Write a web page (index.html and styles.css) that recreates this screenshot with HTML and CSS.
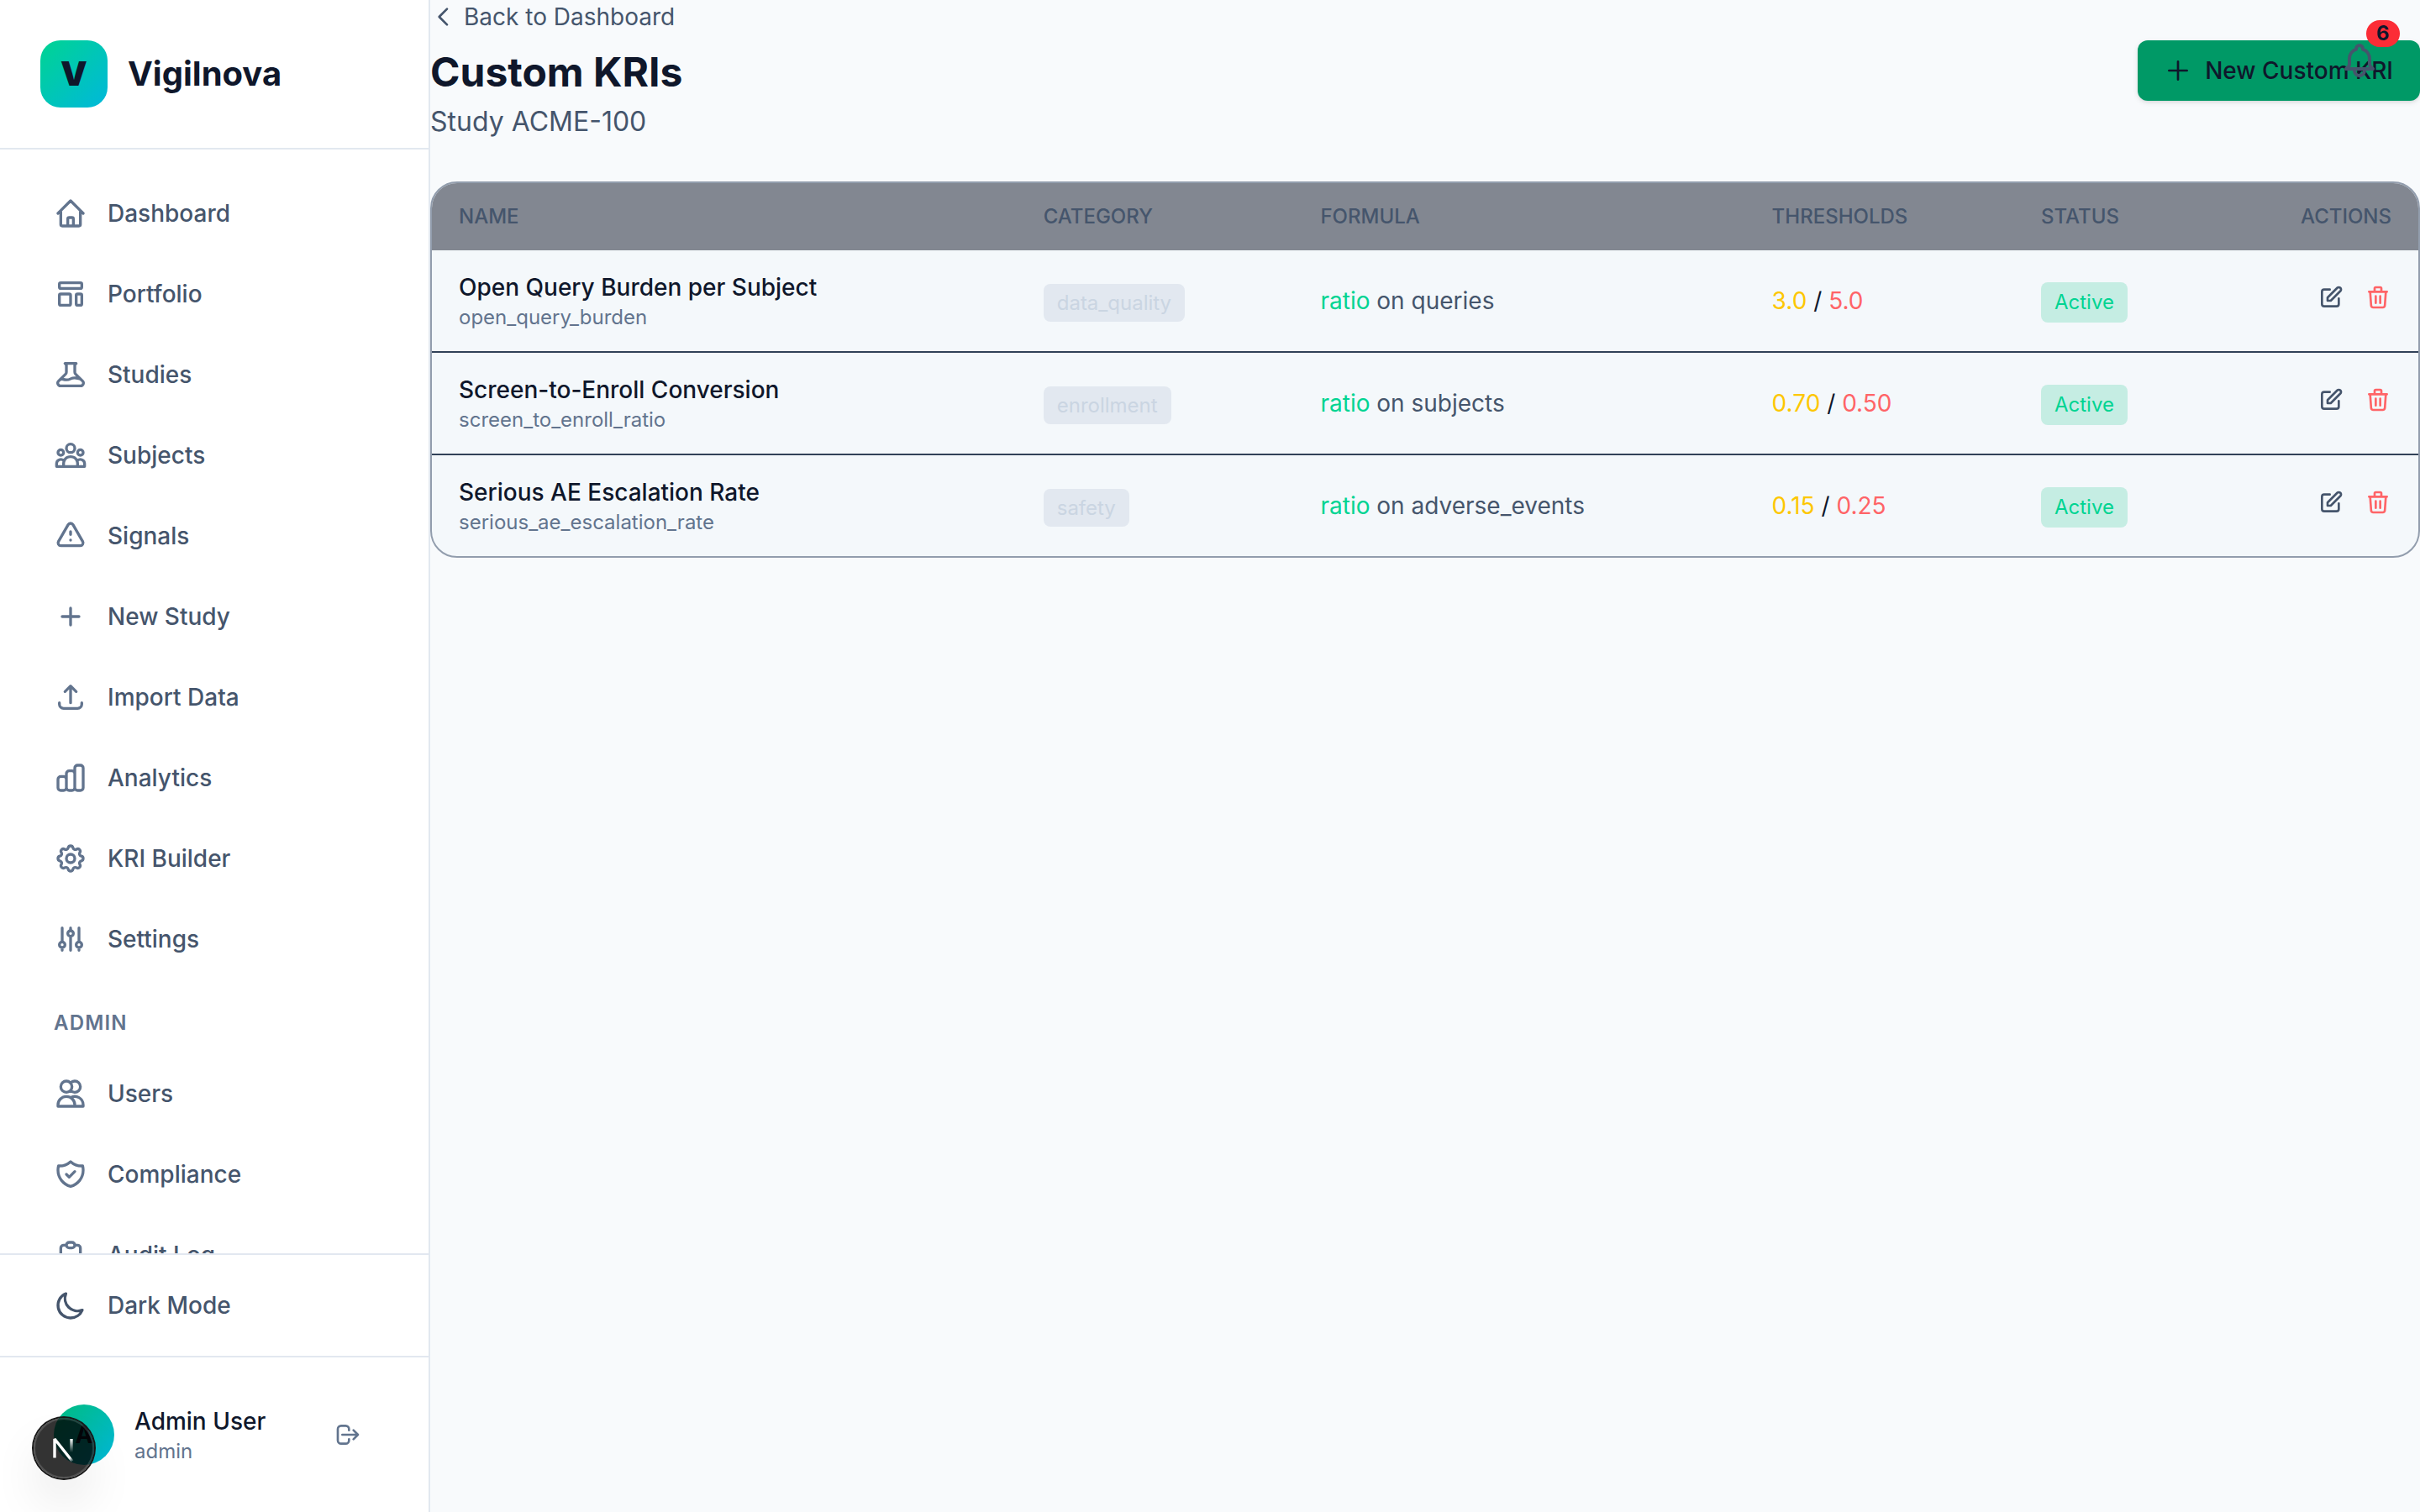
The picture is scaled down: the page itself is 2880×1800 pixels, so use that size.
FILE: index.html
```html
<!DOCTYPE html>
<html lang="en">
<head>
  <meta charset="UTF-8">
  <meta name="viewport" content="width=device-width, initial-scale=1.0">
  <title>Vigilnova</title>
  <link rel="stylesheet" href="styles.css">
</head>
<body>

<!-- icons used more than once -->
<svg class="sprite" aria-hidden="true">
  <symbol id="icon-edit" viewBox="0 0 24 24"><path d="M11 5H6a2 2 0 00-2 2v11a2 2 0 002 2h11a2 2 0 002-2v-5m-1.414-9.414a2 2 0 112.828 2.828L11.828 15H9v-2.828l8.586-8.586z"/></symbol>
  <symbol id="icon-trash" viewBox="0 0 24 24"><path d="M19 7l-.867 12.142A2 2 0 0116.138 21H7.862a2 2 0 01-1.995-1.858L5 7m5 4v6m4-6v6m1-10V4a1 1 0 00-1-1h-4a1 1 0 00-1 1v3M4 7h16"/></symbol>
</svg>

<div class="app">
  <aside class="sidebar">
    <div class="brand">
      <span class="brand-logo">V</span>
      <span class="brand-name">Vigilnova</span>
    </div>

    <nav class="nav">
      <a class="nav-item" href="#">
        <svg class="icon" viewBox="0 0 24 24"><path d="M3 12l2-2m0 0l7-7 7 7M5 10v10a1 1 0 001 1h3m10-11l2 2m-2-2v10a1 1 0 01-1 1h-3m-6 0a1 1 0 001-1v-4a1 1 0 011-1h2a1 1 0 011 1v4a1 1 0 001 1m-6 0h6"/></svg>
        Dashboard
      </a>
      <a class="nav-item" href="#">
        <svg class="icon" viewBox="0 0 24 24"><path d="M4 5a1 1 0 011-1h14a1 1 0 011 1v2a1 1 0 01-1 1H5a1 1 0 01-1-1V5zM4 13a1 1 0 011-1h6a1 1 0 011 1v6a1 1 0 01-1 1H5a1 1 0 01-1-1v-6zM16 13a1 1 0 011-1h2a1 1 0 011 1v6a1 1 0 01-1 1h-2a1 1 0 01-1-1v-6z"/></svg>
        Portfolio
      </a>
      <a class="nav-item" href="#">
        <svg class="icon" viewBox="0 0 24 24"><path d="M19.428 15.428a2 2 0 00-1.022-.547l-2.387-.477a6 6 0 00-3.86.517l-.318.158a6 6 0 01-3.86.517L6.05 15.21a2 2 0 00-1.806.547M8 4h8l-1 1v5.172a2 2 0 00.586 1.414l5 5c1.26 1.26.367 3.414-1.415 3.414H4.828c-1.782 0-2.674-2.154-1.414-3.414l5-5A2 2 0 009 10.172V5L8 4z"/></svg>
        Studies
      </a>
      <a class="nav-item" href="#">
        <svg class="icon" viewBox="0 0 24 24"><path d="M17 20h5v-2a3 3 0 00-5.356-1.857M17 20H7m10 0v-2c0-.656-.126-1.283-.356-1.857M7 20H2v-2a3 3 0 015.356-1.857M7 20v-2c0-.656.126-1.283.356-1.857m0 0a5.002 5.002 0 019.288 0M15 7a3 3 0 11-6 0 3 3 0 016 0zm6 3a2 2 0 11-4 0 2 2 0 014 0zM7 10a2 2 0 11-4 0 2 2 0 014 0z"/></svg>
        Subjects
      </a>
      <a class="nav-item" href="#">
        <svg class="icon" viewBox="0 0 24 24"><path d="M12 9v2m0 4h.01m-6.938 4h13.856c1.54 0 2.502-1.667 1.732-3L13.732 4c-.77-1.333-2.694-1.333-3.464 0L3.34 16c-.77 1.333.192 3 1.732 3z"/></svg>
        Signals
      </a>
      <a class="nav-item" href="#">
        <svg class="icon" viewBox="0 0 24 24"><path d="M12 6v6m0 0v6m0-6h6m-6 0H6"/></svg>
        New Study
      </a>
      <a class="nav-item" href="#">
        <svg class="icon" viewBox="0 0 24 24"><path d="M4 16v1a3 3 0 003 3h10a3 3 0 003-3v-1m-4-8l-4-4m0 0L8 8m4-4v12"/></svg>
        Import Data
      </a>
      <a class="nav-item" href="#">
        <svg class="icon" viewBox="0 0 24 24"><path d="M9 19v-6a2 2 0 00-2-2H5a2 2 0 00-2 2v6a2 2 0 002 2h2a2 2 0 002-2zm0 0V9a2 2 0 012-2h2a2 2 0 012 2v10m-6 0a2 2 0 002 2h2a2 2 0 002-2m0 0V5a2 2 0 012-2h2a2 2 0 012 2v14a2 2 0 01-2 2h-2a2 2 0 01-2-2z"/></svg>
        Analytics
      </a>
      <a class="nav-item" href="#">
        <svg class="icon" viewBox="0 0 24 24"><path d="M10.325 4.317c.426-1.756 2.924-1.756 3.35 0a1.724 1.724 0 002.573 1.066c1.543-.94 3.31.826 2.37 2.37a1.724 1.724 0 001.065 2.572c1.756.426 1.756 2.924 0 3.35a1.724 1.724 0 00-1.066 2.573c.94 1.543-.826 3.31-2.37 2.37a1.724 1.724 0 00-2.572 1.065c-.426 1.756-2.924 1.756-3.35 0a1.724 1.724 0 00-2.573-1.066c-1.543.94-3.31-.826-2.37-2.37a1.724 1.724 0 00-1.065-2.572c-1.756-.426-1.756-2.924 0-3.35a1.724 1.724 0 001.066-2.573c-.94-1.543.826-3.31 2.37-2.37.996.608 2.296.07 2.572-1.065z"/><path d="M15 12a3 3 0 11-6 0 3 3 0 016 0z"/></svg>
        KRI Builder
      </a>
      <a class="nav-item" href="#">
        <svg class="icon" viewBox="0 0 24 24"><path d="M12 6V4m0 2a2 2 0 100 4m0-4a2 2 0 110 4m-6 8a2 2 0 100-4m0 4a2 2 0 110-4m0 4v2m0-6V4m6 6v10m6-2a2 2 0 100-4m0 4a2 2 0 110-4m0 4v2m0-6V4"/></svg>
        Settings
      </a>

      <h2 class="nav-heading">Admin</h2>

      <a class="nav-item" href="#">
        <svg class="icon" viewBox="0 0 24 24"><path d="M12 4.354a4 4 0 110 5.292M15 21H3v-1a6 6 0 0112 0v1zm0 0h6v-1a6 6 0 00-9-5.197M13 7a4 4 0 11-8 0 4 4 0 018 0z"/></svg>
        Users
      </a>
      <a class="nav-item" href="#">
        <svg class="icon" viewBox="0 0 24 24"><path d="M9 12l2 2 4-4m5.618-4.016A11.955 11.955 0 0112 2.944a11.955 11.955 0 01-8.618 3.04A12.02 12.02 0 003 9c0 5.591 3.824 10.29 9 11.622 5.176-1.332 9-6.03 9-11.622 0-1.042-.133-2.052-.382-3.016z"/></svg>
        Compliance
      </a>
      <a class="nav-item" href="#">
        <svg class="icon" viewBox="0 0 24 24"><path d="M9 5H7a2 2 0 00-2 2v12a2 2 0 002 2h10a2 2 0 002-2V7a2 2 0 00-2-2h-2M9 5a2 2 0 002 2h2a2 2 0 002-2M9 5a2 2 0 012-2h2a2 2 0 012 2"/></svg>
        Audit Log
      </a>
    </nav>

    <div class="theme">
      <button class="nav-item theme-toggle" type="button">
        <svg class="icon" viewBox="0 0 24 24"><path d="M20.354 15.354A9 9 0 018.646 3.646 9.003 9.003 0 0012 21a9.003 9.003 0 008.354-5.646z"/></svg>
        Dark Mode
      </button>
    </div>

    <div class="user">
      <span class="avatar">A</span>
      <div class="user-info">
        <p class="user-name">Admin User</p>
        <p class="user-role">admin</p>
      </div>
      <button class="logout" type="button" aria-label="Log out">
        <svg class="icon icon-sm" viewBox="0 0 24 24"><path d="M17 16l4-4m0 0l-4-4m4 4H7m6 4v1a3 3 0 01-3 3H6a3 3 0 01-3-3V7a3 3 0 013-3h4a3 3 0 013 3v1"/></svg>
      </button>
    </div>
  </aside>

  <main class="main">
    <header class="page-header">
      <div>
        <a class="back" href="#">
          <svg class="icon icon-sm" viewBox="0 0 24 24"><path d="M15 19l-7-7 7-7"/></svg>
          Back to Dashboard
        </a>
        <h1 class="title">Custom KRIs</h1>
        <p class="subtitle">Study ACME-100</p>
      </div>
      <button class="new-kri" type="button">
        <svg class="icon icon-sm" viewBox="0 0 24 24"><path d="M12 4v16m8-8H4"/></svg>
        New Custom KRI
      </button>
    </header>

    <div class="card">
      <table class="kri-table">
        <thead>
          <tr>
            <th>Name</th>
            <th>Category</th>
            <th>Formula</th>
            <th>Thresholds</th>
            <th>Status</th>
            <th class="right">Actions</th>
          </tr>
        </thead>
        <tbody>
          <tr>
            <td>
              <div class="kri-name">Open Query Burden per Subject</div>
              <div class="kri-key">open_query_burden</div>
            </td>
            <td class="badge-cell"><span class="category">data_quality</span></td>
            <td class="formula"><span class="func">ratio</span> on queries</td>
            <td><span class="warn">3.0</span> / <span class="crit">5.0</span></td>
            <td class="badge-cell"><button class="status" type="button">Active</button></td>
            <td>
              <div class="actions">
                <button class="action" type="button" aria-label="Edit"><svg class="icon icon-sm"><use href="#icon-edit"/></svg></button>
                <button class="action delete" type="button" aria-label="Delete"><svg class="icon icon-sm"><use href="#icon-trash"/></svg></button>
              </div>
            </td>
          </tr>
          <tr>
            <td>
              <div class="kri-name">Screen-to-Enroll Conversion</div>
              <div class="kri-key">screen_to_enroll_ratio</div>
            </td>
            <td class="badge-cell"><span class="category">enrollment</span></td>
            <td class="formula"><span class="func">ratio</span> on subjects</td>
            <td><span class="warn">0.70</span> / <span class="crit">0.50</span></td>
            <td class="badge-cell"><button class="status" type="button">Active</button></td>
            <td>
              <div class="actions">
                <button class="action" type="button" aria-label="Edit"><svg class="icon icon-sm"><use href="#icon-edit"/></svg></button>
                <button class="action delete" type="button" aria-label="Delete"><svg class="icon icon-sm"><use href="#icon-trash"/></svg></button>
              </div>
            </td>
          </tr>
          <tr>
            <td>
              <div class="kri-name">Serious AE Escalation Rate</div>
              <div class="kri-key">serious_ae_escalation_rate</div>
            </td>
            <td class="badge-cell"><span class="category">safety</span></td>
            <td class="formula"><span class="func">ratio</span> on adverse_events</td>
            <td><span class="warn">0.15</span> / <span class="crit">0.25</span></td>
            <td class="badge-cell"><button class="status" type="button">Active</button></td>
            <td>
              <div class="actions">
                <button class="action" type="button" aria-label="Edit"><svg class="icon icon-sm"><use href="#icon-edit"/></svg></button>
                <button class="action delete" type="button" aria-label="Delete"><svg class="icon icon-sm"><use href="#icon-trash"/></svg></button>
              </div>
            </td>
          </tr>
        </tbody>
      </table>
    </div>
  </main>
</div>

<button class="bell" type="button" aria-label="Notifications">
  <svg class="icon icon-lg" viewBox="0 0 24 24"><path d="M15 17h5l-1.405-1.405A2.032 2.032 0 0118 14.158V11a6.002 6.002 0 00-4-5.659V5a2 2 0 10-4 0v.341C7.67 6.165 6 8.388 6 11v3.159c0 .538-.214 1.055-.595 1.436L4 17h5m6 0v1a3 3 0 11-6 0v-1m6 0H9"/></svg>
  <span class="bell-count">6</span>
</button>

<button class="dev-badge" type="button" aria-label="Open dev tools">
  <svg class="dev-logo" viewBox="0 0 40 40" fill="none">
    <defs>
      <linearGradient id="fade-diagonal" gradientUnits="userSpaceOnUse" x1="22" y1="24" x2="31" y2="36">
        <stop stop-color="#fff"/>
        <stop offset="0.6" stop-color="#fff"/>
        <stop offset="1" stop-color="#fff" stop-opacity="0"/>
      </linearGradient>
      <linearGradient id="fade-bar" gradientUnits="userSpaceOnUse" x1="29" y1="9" x2="29" y2="25">
        <stop stop-color="#fff"/>
        <stop offset="1" stop-color="#fff" stop-opacity="0"/>
      </linearGradient>
    </defs>
    <path d="M9 31.500V9L30 35.500" stroke="url(#fade-diagonal)" stroke-width="3.400" stroke-linejoin="bevel"/>
    <path d="M29 9v16" stroke="url(#fade-bar)" stroke-width="3.400"/>
  </svg>
</button>

</body>
</html>
```
FILE: styles.css
```css
* {
  box-sizing: border-box;
}
body {
  margin: 0;
  font-family: Inter, "Liberation Sans", sans-serif;
  font-size: 28px;
  line-height: 40px;
  color: #0f172b;
  background-color: #f8fafc;
}
h1, h2, p {
  margin: 0;
}
a {
  color: inherit;
  text-decoration: none;
}
button {
  padding: 0;
  border: none;
  background: none;
  font: inherit;
  color: inherit;
  cursor: pointer;
}
.sprite {
  display: none;
}
.icon {
  display: block;
  flex-shrink: 0;
  width: 40px;
  height: 40px;
  fill: none;
  stroke: currentColor;
  stroke-width: 2;
  stroke-linecap: round;
  stroke-linejoin: round;
}
.icon-sm {
  width: 32px;
  height: 32px;
}
.icon-lg {
  width: 48px;
  height: 48px;
}

/* Sidebar */
.app {
  display: flex;
  height: 100vh;
}
.sidebar {
  display: flex;
  flex-direction: column;
  flex-shrink: 0;
  width: 512px;
  background-color: #fff;
  border-right: 2px solid #e2e8f0;
}
.brand {
  display: flex;
  align-items: center;
  gap: 24px;
  padding: 48px;
  border-bottom: 2px solid #e2e8f0;
  font-size: 40px;
  font-weight: 700;
}
.brand-logo {
  display: flex;
  align-items: center;
  justify-content: center;
  width: 80px;
  height: 80px;
  border-radius: 24px;
  background: linear-gradient(135deg, #00d492, #00b8db);
  font-weight: 900;
}
.nav {
  flex: 1;
  min-height: 0;
  display: flex;
  flex-direction: column;
  gap: 8px;
  padding: 32px;
  overflow-y: auto;
  scrollbar-width: none;
}
.nav-item {
  display: flex;
  flex-shrink: 0;
  align-items: center;
  gap: 24px;
  padding: 24px 32px;
  border-radius: 16px;
  font-weight: 500;
  color: #45556c;
}
.nav-item:hover {
  background-color: #f1f5f9;
}
.nav-item .icon {
  color: #62748e;
}
.nav-heading {
  padding: 32px 32px 16px;
  font-size: 24px;
  line-height: 32px;
  font-weight: 600;
  letter-spacing: 0.05em;
  text-transform: uppercase;
  color: #62748e;
}
.theme {
  padding: 16px 32px;
  border-top: 2px solid #e2e8f0;
}
.theme-toggle {
  width: 100%;
}
.theme-toggle .icon {
  color: #45556c;
}
.user {
  display: flex;
  align-items: center;
  gap: 24px;
  padding: 56px 64px;
  border-top: 2px solid #e2e8f0;
}
.avatar {
  display: flex;
  align-items: center;
  justify-content: center;
  width: 72px;
  height: 72px;
  border-radius: 50%;
  background: linear-gradient(135deg, #00bc7d, #00b8db);
  font-weight: 700;
}
.user-info {
  flex: 1;
}
.user-name {
  font-weight: 500;
}
.user-role {
  font-size: 24px;
  line-height: 32px;
  color: #62748e;
}
.logout {
  padding: 16px;
  color: #62748e;
}

/* Page */
.main {
  flex: 1;
  min-width: 0;
  overflow-y: auto;
}
.page-header {
  display: flex;
  align-items: center;
  justify-content: space-between;
  margin-bottom: 48px;
}
.back {
  display: flex;
  align-items: center;
  gap: 8px;
  margin-bottom: 16px;
  color: #45556c;
}
.title {
  font-size: 48px;
  line-height: 60px;
  font-weight: 700;
}
.subtitle {
  margin-top: 6px;
  font-size: 32px;
  line-height: 46px;
  color: #45556c;
}
.new-kri {
  display: flex;
  align-items: center;
  gap: 16px;
  padding: 16px 32px;
  border-radius: 12px;
  background-color: #009966;
  font-weight: 500;
  box-shadow: 0 2px 6px rgba(0, 0, 0, 0.1), 0 2px 4px -2px rgba(0, 0, 0, 0.1);
}
.new-kri:hover {
  background-color: #00bc7d;
}

/* Table */
.card {
  overflow: hidden;
  border: 2px solid #929dad;
  border-radius: 32px;
  background-color: #f4f8fb;
}
.kri-table {
  width: 100%;
  border-collapse: collapse;
}
.kri-table th,
.kri-table td {
  padding: 24px 32px;
  text-align: left;
}
.kri-table th {
  background-color: #828791;
  font-size: 24px;
  line-height: 32px;
  font-weight: 500;
  text-transform: uppercase;
  color: #45556c;
}
.kri-table th.right {
  text-align: right;
}
.kri-table tbody tr + tr {
  border-top: 2px solid #314158;
}
.kri-table .badge-cell {
  padding-top: 28px;
}
.kri-name {
  font-weight: 500;
}
.kri-key {
  font-size: 24px;
  line-height: 32px;
  color: #62748e;
}
.category {
  padding: 8px 16px;
  border-radius: 8px;
  background-color: #e2e8f0;
  font-size: 24px;
  color: #cad5e2;
}
.formula {
  color: #45556c;
}
.func {
  color: #00d492;
}
.warn {
  color: #fdc700;
}
.crit {
  color: #ff6467;
}
.status {
  padding: 8px 16px;
  border-radius: 8px;
  background-color: #c5ede3;
  font-size: 24px;
  line-height: 32px;
  color: #00d492;
}
.actions {
  display: flex;
  justify-content: flex-end;
  gap: 24px;
  padding-bottom: 8px;
}
.action {
  color: #45556c;
}
.action.delete {
  color: #ff6467;
}

/* Floating buttons */
.bell {
  position: fixed;
  top: 32px;
  right: 32px;
  padding: 16px;
  color: #45556c;
}
.bell-count {
  position: absolute;
  top: -8px;
  right: -8px;
  min-width: 40px;
  padding: 0 12px;
  border-radius: 16px;
  background-color: #fb2c36;
  font-size: 24px;
  line-height: 32px;
  font-weight: 700;
  color: #0f172b;
}
.dev-badge {
  position: fixed;
  left: 40px;
  bottom: 40px;
  display: flex;
  align-items: center;
  justify-content: center;
  width: 72px;
  height: 72px;
  border-radius: 50%;
  background-color: rgba(0, 0, 0, 0.8);
  box-shadow: 0 0 0 2px #171717, inset 0 0 0 2px rgba(255, 255, 255, 0.14), 0 32px 64px -16px rgba(0, 0, 0, 0.24);
}
.dev-logo {
  width: 40px;
  height: 40px;
}
```
